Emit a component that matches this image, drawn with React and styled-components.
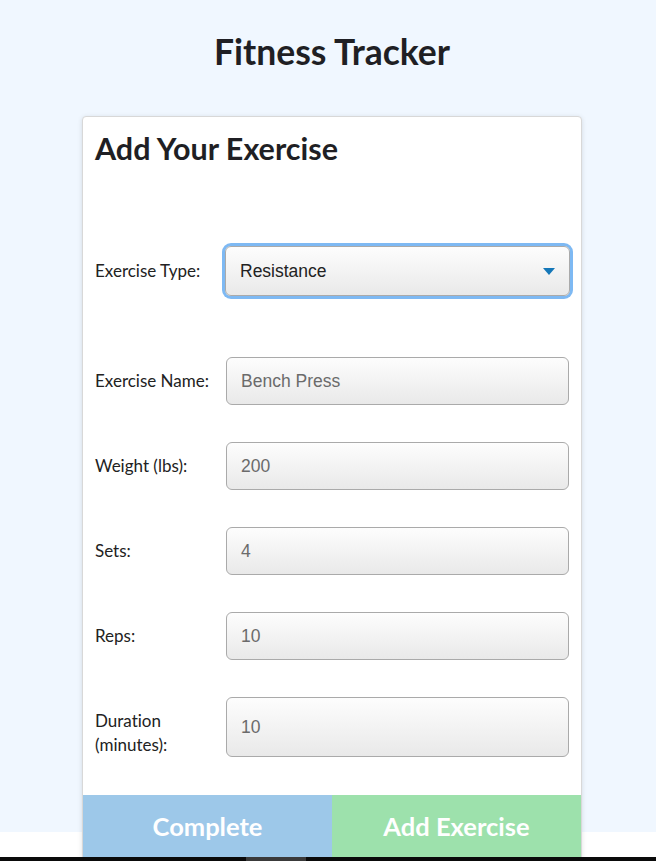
import React from 'react'
import styled, { createGlobalStyle } from 'styled-components'

const GlobalStyle = createGlobalStyle`
body {
    margin: 0;
    font-family: Lato, "Open Sans", sans-serif;
    font-variant-ligatures: none;
    color: #222;
    background: #fff;
}
`

// light blue backdrop stops at 832px, the card runs on past it
const Page = styled.main`
background: linear-gradient(to bottom, #f0f7ff 0, #f0f7ff 832px, #fff 832px);
padding: 31px 0 40px 8px;
box-sizing: border-box;
`

const Title = styled.h1`
margin: 0 0 43px;
text-align: center;
font-size: 35.5px;
font-weight: 700;
line-height: 42px;
color: #1f1f24;
`

const Card = styled.section`
width: 500px;
margin: 0 auto;
background: #fff;
border: 1px solid #d8d8d8;
border-radius: 4px;
box-shadow: 0 1px 5px rgba(0, 0, 0, 0.12);
overflow: hidden;
box-sizing: border-box;
`

const CardTitle = styled.h2`
margin: 0;
padding: 11px 12px 0;
font-size: 30.5px;
font-weight: 700;
line-height: 40px;
color: #1f1f24;
`

const Form = styled.form`
display: flex;
flex-direction: column;
padding: 0 12px;
`

const Row = styled.div`
display: grid;
grid-template-columns: 131px 1fr;
align-items: center;
margin-top: ${props => props.gap}px;
`

const Label = styled.label`
font-size: 17px;
line-height: 24px;
color: #222;
padding-right: 12px;
padding-top: ${props => props.wrapped ? 12 : 0}px;
`

const Field = styled.div`
height: ${props => props.h || 48}px;
display: flex;
align-items: center;
padding: 0 14px;
box-sizing: border-box;
border: 1px solid #aaa;
border-radius: 6px;
background: linear-gradient(to bottom, #fdfdfd, #e9e9e9);
font-family: "Liberation Sans", Arial, sans-serif;
font-size: 17.5px;
color: ${props => props.dim ? '#6b6b6b' : '#222'};
`

const Select = styled(Field)`
height: 50px;
margin-left: -1px;
margin-right: -1px;
justify-content: space-between;
box-shadow: 0 0 0 3px #7eb9f3;
`

const Caret = styled.span`
width: 0;
height: 0;
border-left: 6px solid transparent;
border-right: 6px solid transparent;
border-top: 7px solid #1477b8;
`

const Actions = styled.div`
display: grid;
grid-template-columns: 1fr 1fr;
margin-top: 38px;
`

const ActionButton = styled.button`
height: 66px;
border: none;
padding: 0 0 4px;
background-color: ${props => props.bg};
color: #fff;
font-family: Lato, sans-serif;
font-size: 25.5px;
font-weight: 700;
`

const Scrollbar = styled.div`
position: fixed;
left: 0;
right: 0;
bottom: 0;
height: 4px;
background: #0a0a0a;

&::after {
    content: '';
    position: absolute;
    left: 246px;
    width: 60px;
    top: 0;
    bottom: 0;
    background: #3a3a3a;
}
`

const fields = [
    { label: 'Exercise Name:', value: 'Bench Press', gap: 61 },
    { label: 'Weight (lbs):', value: '200', gap: 37 },
    { label: 'Sets:', value: '4', gap: 37 },
    { label: 'Reps:', value: '10', gap: 37 },
    { label: 'Duration (minutes):', value: '10', gap: 37, h: 60, wrapped: true },
]

function App() {
    return (
        <>
            <GlobalStyle />
            <Page>
                <Title>Fitness Tracker</Title>
                <Card>
                    <CardTitle>Add Your Exercise</CardTitle>
                    <Form onSubmit={e => e.preventDefault()}>
                        <Row gap={78}>
                            <Label>Exercise Type:</Label>
                            <Select>
                                Resistance
                                <Caret />
                            </Select>
                        </Row>
                        {fields.map(f => (
                            <Row key={f.label} gap={f.gap}>
                                <Label wrapped={f.wrapped}>{f.label}</Label>
                                <Field dim h={f.h}>{f.value}</Field>
                            </Row>
                        ))}
                    </Form>
                    <Actions>
                        <ActionButton bg='#9dc8e9'>Complete</ActionButton>
                        <ActionButton bg='#9de1ac'>Add Exercise</ActionButton>
                    </Actions>
                </Card>
            </Page>
            <Scrollbar />
        </>
    )
}

export default App
